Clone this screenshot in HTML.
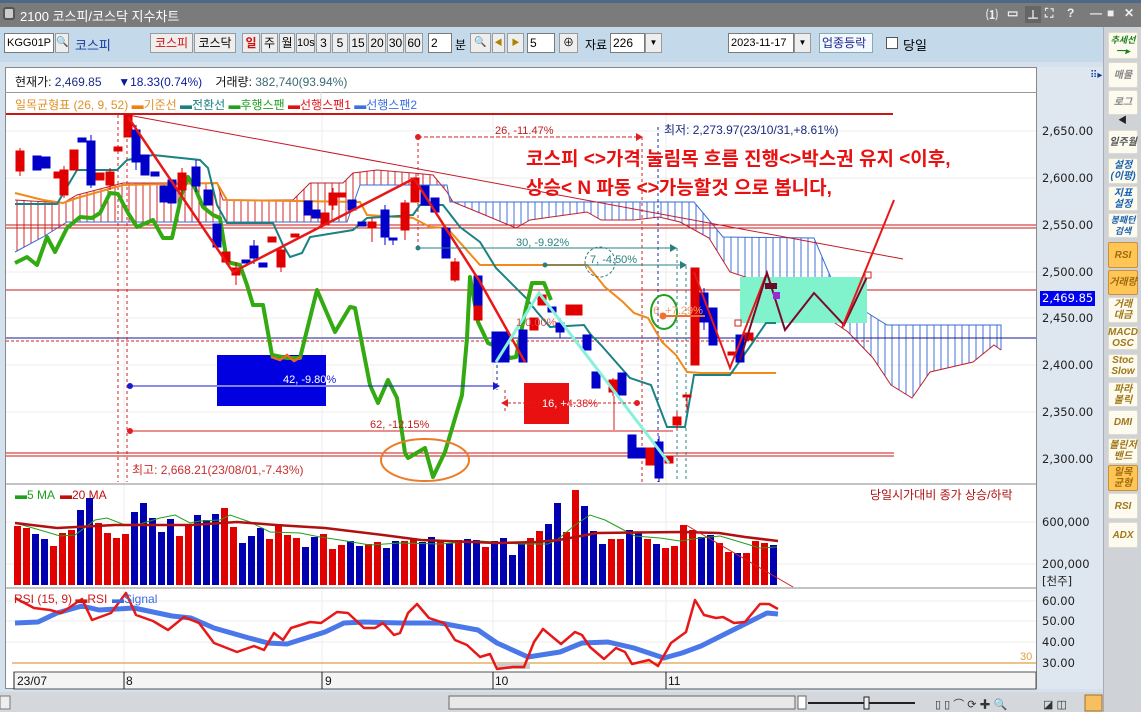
<!DOCTYPE html>
<html><head><meta charset="utf-8">
<style>
*{margin:0;padding:0;box-sizing:border-box}
body{width:1141px;height:712px;overflow:hidden;background:#d5e2ee;font-family:"Liberation Sans","Noto Sans CJK KR",sans-serif;font-size:12px;position:relative}
.a{position:absolute}
.ti{position:absolute;top:6px;color:#eee;font-size:12px;font-weight:bold;white-space:nowrap}
.btn{position:absolute;top:33px;height:20px;background:#eeeeee;border:1px solid #9a9a9a;text-align:center;line-height:18px;font-size:12px;color:#000}
.inp{position:absolute;top:33px;height:20px;background:#fff;border:1px solid #7a7a7a;line-height:18px;padding-left:2px;font-size:12px}
.sb{position:absolute;left:1108px;width:30px;background:#fdfaef;border:1px solid #e0dccc;border-radius:2px;font-size:10px;font-style:italic;font-weight:bold;text-align:center;line-height:11px;color:#a07818;display:flex;align-items:center;justify-content:center}
.sb.o{background:#ffc655;border:1px solid #c89040;color:#a06a10}
.sb.b{color:#1a62b0}
.ax{position:absolute;left:1042px;font-family:"DejaVu Sans",sans-serif;font-size:11.5px;color:#222}
</style></head><body>
<div class="a" style="left:0;top:0;width:1141px;height:3px;background:#4c6a88"></div>
<div class="a" style="left:0;top:3px;width:1141px;height:24px;background:#7b7b7b"></div>
<div class="a" style="left:3px;top:7px;width:12px;height:13px;background:#ccc;border-radius:3px;border:2px solid #555"></div>
<div class="a" style="left:20px;top:6px;color:#fff;font-size:13px">2100 코스피/코스닥 지수차트</div>
<div class="ti" style="left:986px">⑴</div>
<div class="ti" style="left:1007px">▭</div>
<div class="ti" style="left:1025px;background:#666;padding:0 2px">⊥</div>
<div class="ti" style="left:1045px">⛶</div>
<div class="ti" style="left:1067px">?</div>
<div class="ti" style="left:1090px">—</div>
<div class="ti" style="left:1107px">■</div>
<div class="ti" style="left:1124px">✕</div>
<div class="a" style="left:0;top:27px;width:1141px;height:35px;background:#c4daeb"></div>
<div class="inp" style="left:4px;width:50px;font-size:11px">KGG01P</div>
<div class="btn" style="left:55px;width:14px;font-size:10px">🔍</div>
<div class="a" style="left:75px;top:35px;color:#1a3aa0;font-size:13px">코스피</div>
<div class="btn" style="left:150px;width:43px;color:#d01010">코스피</div>
<div class="btn" style="left:194px;width:42px">코스닥</div>
<div class="btn" style="left:242px;width:18px;color:#d01010;font-weight:bold">일</div>
<div class="btn" style="left:261px;width:17px">주</div>
<div class="btn" style="left:279px;width:16px">월</div>
<div class="btn" style="left:296px;width:19px;font-size:11px">10s</div>
<div class="btn" style="left:316px;width:15px">3</div>
<div class="btn" style="left:332px;width:16px">5</div>
<div class="btn" style="left:349px;width:18px">15</div>
<div class="btn" style="left:368px;width:18px">20</div>
<div class="btn" style="left:387px;width:17px">30</div>
<div class="btn" style="left:405px;width:18px">60</div>
<div class="inp" style="left:428px;width:24px">2</div>
<div class="a" style="left:455px;top:36px">분</div>
<div class="btn" style="left:470px;width:21px;font-size:10px">🔍</div>
<div class="btn" style="left:492px;width:13px;font-size:8px;color:#b08000">◀</div>
<div class="btn" style="left:507px;width:17px;font-size:8px;color:#b08000">▶</div>
<div class="inp" style="left:527px;width:28px">5</div>
<div class="btn" style="left:559px;width:19px;font-size:11px">⊕</div>
<div class="a" style="left:585px;top:36px">자료</div>
<div class="inp" style="left:610px;width:35px">226</div>
<div class="btn" style="left:645px;width:17px;font-size:8px">▼</div>
<div class="inp" style="left:728px;width:66px;font-size:11px">2023-11-17</div>
<div class="btn" style="left:794px;width:17px;font-size:8px">▼</div>
<div class="inp" style="left:819px;width:54px;color:#1a2a90;border-color:#8aa;background:#f4f8ff">업종등락</div>
<div class="a" style="left:886px;top:37px;width:12px;height:12px;background:#fff;border:1px solid #555"></div>
<div class="a" style="left:903px;top:35px;font-size:13px">당일</div>

<div class="a" style="left:1037px;top:67px;width:66px;height:622px;background:#dee7f0"></div>
<div class="a" style="left:1090px;top:70px;font-size:10px;color:#0a3a9a">⠿▸</div>
<div class="a" style="left:1103px;top:27px;width:38px;height:685px;background:#cfd3d7;border-left:1px solid #aab"></div>
<div class="sb" style="top:32px;height:27px;color:#208020;font-size:9px;background:#fdfaef">추세선<br>━▸</div>
<div class="sb" style="top:62px;height:26px;color:#888">매물</div>
<div class="sb" style="top:90px;height:25px;color:#888">로그</div>
<div class="a" style="left:1118px;top:113px;font-size:9px;color:#222">◀</div>
<div class="sb" style="top:130px;height:24px;color:#555">일주월</div>
<div class="sb b" style="top:158px;height:26px">설정<br>(이평)</div>
<div class="sb b" style="top:186px;height:25px">지표<br>설정</div>
<div class="sb b" style="top:213px;height:25px;font-size:9px">봉패턴<br>검색</div>
<div class="sb o" style="top:242px;height:26px">RSI</div>
<div class="sb o" style="top:270px;height:25px">거래량</div>
<div class="sb" style="top:297px;height:26px">거래<br>대금</div>
<div class="sb" style="top:326px;height:24px">MACD<br>OSC</div>
<div class="sb" style="top:354px;height:24px">Stoc<br>Slow</div>
<div class="sb" style="top:382px;height:25px">파라<br>볼릭</div>
<div class="sb" style="top:410px;height:25px">DMI</div>
<div class="sb" style="top:438px;height:26px">볼린저<br>밴드</div>
<div class="sb o" style="top:465px;height:26px">일목<br>균형</div>
<div class="sb" style="top:493px;height:26px">RSI</div>
<div class="sb" style="top:522px;height:26px">ADX</div>

<div class="a" style="left:5px;top:67px;width:1032px;height:622px;background:#fff;border:1px solid #888"></div>
<div class="a" style="left:5px;top:92px;width:1032px;height:1px;background:#999"></div>
<div class="a" style="left:15px;top:73px;font-size:12px;color:#111">현재가: <span style="color:#1a2a80">2,469.85</span> &nbsp;&nbsp;&nbsp;&nbsp;<span style="color:#0a1a9a">▼18.33(0.74%)</span> &nbsp;&nbsp;&nbsp;거래량: <span style="color:#3a6a70">382,740(93.94%)</span></div>
<div class="a" style="left:15px;top:96px;font-size:12px;color:#e0902a">일목균형표 (26, 9, 52) <span style="color:#f08010">▬</span>기준선 <span style="color:#1a8080">▬</span><span style="color:#1a8080">전환선</span> <span style="color:#20a020">▬후행스팬</span> <span style="color:#e01010">▬선행스팬1</span> <span style="color:#3a70e0">▬선행스팬2</span></div>

<div class="ax" style="top:124px">2,650.00</div>
<div class="ax" style="top:171px">2,600.00</div>
<div class="ax" style="top:218px">2,550.00</div>
<div class="ax" style="top:265px">2,500.00</div>
<div class="ax" style="top:311px">2,450.00</div>
<div class="ax" style="top:358px">2,400.00</div>
<div class="ax" style="top:405px">2,350.00</div>
<div class="ax" style="top:452px">2,300.00</div>
<div class="a" style="left:1040px;top:291px;width:55px;height:15px;background:#0000f0;color:#fff;font-family:'DejaVu Sans',sans-serif;font-size:11.5px;line-height:15px;padding-left:2px">2,469.85</div>
<div class="ax" style="top:515px">600,000</div>
<div class="ax" style="top:557px">200,000</div>
<div class="ax" style="top:573px">[천주]</div>
<div class="ax" style="top:594px">60.00</div>
<div class="ax" style="top:614px">50.00</div>
<div class="ax" style="top:635px">40.00</div>
<div class="ax" style="top:656px">30.00</div>

<svg class="a" style="left:0;top:0" width="1141" height="712" viewBox="0 0 1141 712" font-family="Liberation Sans, Noto Sans CJK KR, sans-serif">
<defs>
<pattern id="hr" width="7" height="10" patternUnits="userSpaceOnUse"><line x1="3" y1="0" x2="3" y2="10" stroke="#d02828" stroke-width="1"/></pattern>
<pattern id="hb" width="7" height="10" patternUnits="userSpaceOnUse"><line x1="3" y1="0" x2="3" y2="10" stroke="#4070d8" stroke-width="1"/></pattern>
<clipPath id="cb"><rect x="217" y="355" width="109" height="51"/></clipPath>
<clipPath id="cr"><rect x="524" y="383" width="45" height="41"/></clipPath>
</defs>
<g stroke="#ececec" stroke-width="1">
<line x1="124" y1="112" x2="124" y2="672"/><line x1="322" y1="112" x2="322" y2="672"/><line x1="493" y1="112" x2="493" y2="672"/><line x1="666" y1="112" x2="666" y2="672"/>
<line x1="6" y1="131" x2="1036" y2="131"/><line x1="6" y1="178" x2="1036" y2="178"/><line x1="6" y1="272" x2="1036" y2="272"/><line x1="6" y1="318" x2="1036" y2="318"/><line x1="6" y1="365" x2="1036" y2="365"/><line x1="6" y1="412" x2="1036" y2="412"/>
<line x1="6" y1="522" x2="1036" y2="522"/><line x1="6" y1="564" x2="1036" y2="564"/>
<line x1="6" y1="601" x2="1036" y2="601"/><line x1="6" y1="621" x2="1036" y2="621"/><line x1="6" y1="642" x2="1036" y2="642"/>
</g>
<line x1="321" y1="92" x2="321" y2="112" stroke="#ddd"/>
<line x1="6" y1="484" x2="1036" y2="484" stroke="#888"/>
<line x1="6" y1="588" x2="1036" y2="588" stroke="#888"/>

<polygon points="15,200 63,203 77,195 123,183 217,183 223,200 293,200 310,183 343,183 353,173 377,170 413,173 433,175 447,192 453,202 450,202 447,185 360,185 347,222 67,222 43,237 15,252" fill="url(#hr)"/>
<polygon points="450,202 694,202 723,237 814,238 837,292 866,312 887,325 1001,325 1001,350 994,345 973,362 930,372 912,398 891,385 873,358 848,332 819,312 776,287 730,272 709,238 680,222 659,217 634,220 601,220 587,212 530,220 516,228 480,213 453,202" fill="url(#hb)"/>
<polyline points="15,200 63,203 77,195 123,183 217,183 223,200 293,200 310,183 343,183 353,173 377,170 413,173 433,175 447,192 453,202 480,213 516,228 530,220 587,212 601,220 634,220 659,217 680,222 709,238 730,272 776,287 819,312 848,332 873,358 891,385 912,398 930,372 973,362 994,345 1001,350" fill="none" stroke="#c02030" stroke-width="1"/>
<polyline points="15,252 43,237 67,222 347,222 360,185 447,185 450,202 694,202 723,237 814,238 837,292 866,312 887,325 1001,325 1001,350" fill="none" stroke="#3a6ad8" stroke-width="1"/>

<line x1="6" y1="114" x2="893" y2="114" stroke="#c81818" stroke-width="2"/>
<line x1="6" y1="225" x2="1036" y2="225" stroke="#c81818" stroke-width="1"/>
<line x1="6" y1="228" x2="1036" y2="228" stroke="#c81818" stroke-width="1"/>
<line x1="6" y1="290" x2="1036" y2="290" stroke="#c81818" stroke-width="1"/>
<line x1="6" y1="338" x2="1036" y2="338" stroke="#1a1a90" stroke-width="1"/>
<line x1="6" y1="341" x2="870" y2="341" stroke="#d02020" stroke-width="1" stroke-dasharray="3,2"/>
<line x1="130" y1="431" x2="673" y2="431" stroke="#d02020" stroke-width="1"/>
<line x1="6" y1="453" x2="894" y2="453" stroke="#c81818" stroke-width="1"/>
<line x1="6" y1="456" x2="894" y2="456" stroke="#c81818" stroke-width="1"/>
<line x1="128" y1="115" x2="903" y2="259" stroke="#c81828" stroke-width="1"/>
<line x1="118" y1="115" x2="118" y2="482" stroke="#d02020" stroke-dasharray="3,3"/>
<line x1="127" y1="115" x2="127" y2="482" stroke="#d02020" stroke-dasharray="3,3"/>
<line x1="418" y1="137" x2="418" y2="250" stroke="#d02020" stroke-dasharray="3,3"/>
<line x1="642" y1="137" x2="642" y2="482" stroke="#d02020" stroke-dasharray="3,3"/>
<line x1="658" y1="127" x2="658" y2="482" stroke="#1a2aa0" stroke-dasharray="3,3"/>
<line x1="677" y1="248" x2="677" y2="482" stroke="#2a8080" stroke-dasharray="3,3"/>
<line x1="686" y1="266" x2="686" y2="482" stroke="#2a8080" stroke-dasharray="3,3"/>
<line x1="497" y1="365" x2="497" y2="390" stroke="#1a2aa0" stroke-dasharray="3,3"/>
<line x1="505" y1="390" x2="505" y2="412" stroke="#d02020" stroke-dasharray="3,3"/>
<line x1="614" y1="396" x2="614" y2="430" stroke="#d02020"/>

<rect x="740" y="277" width="127" height="46" fill="#80f2cc"/>
<rect x="217" y="355" width="109" height="51" fill="#0000e0"/>
<rect x="524" y="383" width="45" height="41" fill="#e81010"/>

<polyline points="15,193 43,200 63,203 77,198 123,185 217,183 227,200 360,202 367,215 413,218 430,227 447,228 480,265 587,265 605,287 623,302 634,313 648,318 662,342 676,355 687,372 701,373 776,373" fill="none" stroke="#f08a1a" stroke-width="2"/>
<polyline points="15,204 57,204 77,170 117,170 127,160 153,155 200,160 208,168 217,205 227,223 273,223 283,245 290,257 302,253 310,237 353,230 367,218 413,215 420,205 443,205 460,227 480,242 496,268 526,298 537,312 550,327 584,325 591,335 601,345 630,378 651,385 667,427 685,427 694,375 730,375 751,345 766,323 776,323" fill="none" stroke="#1a8282" stroke-width="2"/>
<polyline points="15,263 27,257 37,265 47,237 55,252 67,228 80,217 92,218 100,213 110,193 118,194 128,213 137,227 153,220 163,238 172,238 182,193 188,177 195,188 203,207 213,215 220,218 227,262 240,265 247,285 253,305 263,305 272,355 287,358 300,358 317,290 335,332 350,307 355,308 370,385 378,403 388,380 397,398 405,453 408,458 425,448 433,477 445,452 462,395 467,338 470,277 478,322 488,343 500,348 510,358 516,357 526,308 532,283 544,283 551,300" fill="none" stroke="#33aa11" stroke-width="4" stroke-linejoin="round"/>
<polyline points="271,357 280,360 287,355 294,361 301,357" fill="none" stroke="#e86a20" stroke-width="2.5"/>

<g stroke-width="1">
<g fill="#e00000" stroke="#e00000">
<line x1="20" y1="148" x2="20" y2="176"/><rect x="16" y="151" width="8" height="20"/>
<rect x="54" y="172" width="8" height="6"/>
<line x1="64" y1="166" x2="64" y2="198"/><rect x="60" y="170" width="8" height="25"/>
<rect x="70" y="150" width="8" height="20"/>
<rect x="96" y="173" width="8" height="7"/>
<line x1="110" y1="168" x2="110" y2="190"/><rect x="106" y="172" width="8" height="13"/>
<rect x="114" y="147" width="8" height="4"/>
<rect x="124" y="115" width="8" height="22"/>
<line x1="182" y1="168" x2="182" y2="195"/><rect x="178" y="173" width="8" height="17"/>
<rect x="222" y="252" width="8" height="10"/>
<line x1="236" y1="262" x2="236" y2="285"/><rect x="232" y="268" width="8" height="7"/>
<rect x="268" y="237" width="8" height="5"/>
<line x1="281" y1="247" x2="281" y2="272"/><rect x="277" y="250" width="8" height="17"/>
<rect x="291" y="234" width="8" height="3"/>
<rect x="321" y="213" width="8" height="12"/>
<line x1="333" y1="188" x2="333" y2="210"/><rect x="329" y="193" width="8" height="12"/>
<rect x="338" y="193" width="8" height="4"/>
<line x1="372" y1="218" x2="372" y2="242"/><rect x="368" y="222" width="8" height="6"/>
<line x1="405" y1="200" x2="405" y2="240"/><rect x="401" y="203" width="8" height="27"/>
<rect x="411" y="178" width="8" height="24"/>
<line x1="455" y1="258" x2="455" y2="282"/><rect x="451" y="262" width="8" height="18"/>
<rect x="474" y="303" width="8" height="17"/>
<rect x="530" y="318" width="8" height="12"/>
<rect x="538" y="295" width="8" height="10"/>
<rect x="566" y="305" width="8" height="10"/><rect x="574" y="305" width="8" height="10"/>
<line x1="613" y1="378" x2="613" y2="396"/><rect x="609" y="380" width="8" height="12"/>
<rect x="646" y="448" width="8" height="17"/>
<rect x="665" y="457" width="8" height="6"/>
<line x1="677" y1="412" x2="677" y2="430"/><rect x="673" y="417" width="8" height="8"/>
<rect x="683" y="395" width="8" height="2"/><line x1="687" y1="395" x2="687" y2="410"/>
<rect x="691" y="268" width="8" height="97"/>
<rect x="728" y="352" width="8" height="3"/>
<rect x="745" y="333" width="8" height="7"/>
</g>
<g fill="#0000c8" stroke="#0000c8">
<rect x="33" y="156" width="8" height="14"/><rect x="42" y="157" width="8" height="11"/>
<rect x="78" y="138" width="8" height="4"/>
<line x1="91" y1="135" x2="91" y2="188"/><rect x="87" y="141" width="8" height="44"/>
<line x1="136" y1="125" x2="136" y2="170"/><rect x="132" y="130" width="8" height="32"/>
<rect x="141" y="155" width="8" height="20"/>
<rect x="151" y="172" width="8" height="4"/>
<rect x="160" y="186" width="8" height="16"/>
<rect x="168" y="180" width="8" height="23"/>
<line x1="196" y1="160" x2="196" y2="192"/><rect x="192" y="167" width="8" height="19"/>
<rect x="204" y="190" width="8" height="15"/>
<rect x="213" y="224" width="8" height="23"/>
<rect x="242" y="260" width="8" height="3"/>
<line x1="254" y1="240" x2="254" y2="264"/><rect x="250" y="246" width="8" height="12"/>
<rect x="259" y="263" width="8" height="4"/>
<rect x="304" y="201" width="8" height="14"/>
<rect x="312" y="210" width="8" height="8"/>
<rect x="348" y="200" width="8" height="10"/>
<rect x="358" y="222" width="8" height="4"/>
<line x1="385" y1="205" x2="385" y2="245"/><rect x="381" y="210" width="8" height="27"/>
<rect x="389" y="238" width="8" height="2"/><line x1="393" y1="238" x2="393" y2="245"/>
<rect x="421" y="186" width="8" height="19"/>
<rect x="431" y="198" width="8" height="14"/>
<rect x="442" y="228" width="8" height="30"/>
<rect x="474" y="276" width="8" height="29"/>
<rect x="492" y="332" width="8" height="30"/><rect x="501" y="332" width="8" height="30"/>
<rect x="519" y="330" width="8" height="32"/>
<rect x="548" y="307" width="8" height="5"/>
<line x1="560" y1="318" x2="560" y2="338"/><rect x="556" y="323" width="8" height="9"/>
<rect x="583" y="335" width="8" height="15"/>
<rect x="592" y="372" width="8" height="16"/>
<rect x="618" y="373" width="8" height="22"/>
<rect x="628" y="435" width="8" height="23"/>
<rect x="637" y="448" width="8" height="10"/>
<line x1="659" y1="436" x2="659" y2="482"/><rect x="655" y="442" width="8" height="36"/>
<line x1="704" y1="288" x2="704" y2="330"/><rect x="700" y="293" width="8" height="29"/>
<rect x="709" y="308" width="8" height="37"/>
<rect x="736" y="335" width="8" height="27"/>
</g>
</g>

<polyline points="128,117 233,272 415,178" fill="none" stroke="#e81818" stroke-width="2.5"/>
<polyline points="415,180 480,282 525,362" fill="none" stroke="#e81818" stroke-width="2.5"/>
<polyline points="496,362 539,293 669,463" fill="none" stroke="#88f0dc" stroke-width="3"/>
<polyline points="694,272 730,368 766,275" fill="none" stroke="#e81818" stroke-width="2"/>
<polyline points="740,360 767,273 785,330 814,293 844,325 867,277" fill="none" stroke="#7a0a2a" stroke-width="2"/>
<line x1="842" y1="328" x2="894" y2="200" stroke="#e81818" stroke-width="2"/>
<rect x="765" y="283" width="12" height="6" fill="#6a0a2a"/>
<rect x="773" y="292" width="7" height="7" fill="#9a2ad8"/>
<rect x="735" y="320" width="6" height="6" fill="#fff" stroke="#d02020"/>
<rect x="865" y="272" width="6" height="6" fill="#fff" stroke="#d02020"/>

<line x1="130" y1="386" x2="493" y2="386" stroke="#1a1ad0"/><line x1="217" y1="386" x2="326" y2="386" stroke="#fff"/><circle cx="130" cy="386" r="3" fill="#1a1ad0"/><polygon points="493,382 500,386 493,390" fill="#1a1ad0"/>
<circle cx="130" cy="431" r="3" fill="#e02020"/>
<text x="283" y="383" font-size="11" fill="#1a1ad0">42, -9.80%</text>
<text x="283" y="383" font-size="11" fill="#fff" clip-path="url(#cb)">42, -9.80%</text>
<text x="370" y="428" font-size="11" fill="#c02020">62, -12.15%</text>
<text x="132" y="474" font-size="12" fill="#c83030">최고: 2,668.21(23/08/01,-7.43%)</text>
<ellipse cx="425" cy="460" rx="44" ry="21" fill="none" stroke="#ee7a28" stroke-width="2"/>
<line x1="508" y1="403" x2="637" y2="403" stroke="#d02020" stroke-dasharray="3,2"/><circle cx="637" cy="403" r="3" fill="#e02020"/><polygon points="508,399 501,403 508,407" fill="#e02020"/>
<text x="542" y="407" font-size="11" fill="#e02020">16, +4.38%</text>
<text x="542" y="407" font-size="11" fill="#fff" clip-path="url(#cr)">16, +4.38%</text>
<line x1="418" y1="137" x2="636" y2="137" stroke="#d02020" stroke-dasharray="4,2"/><circle cx="418" cy="137" r="3" fill="#e02020"/><polygon points="636,133 643,137 636,141" fill="#e02020"/>
<text x="495" y="134" font-size="11" fill="#c02020">26, -11.47%</text>
<text x="664" y="134" font-size="12" fill="#1a2a80">최저: 2,273.97(23/10/31,+8.61%)</text>
<line x1="418" y1="248" x2="670" y2="248" stroke="#2a8080"/><circle cx="418" cy="248" r="2.5" fill="#2a8080"/><polygon points="670,244 677,248 670,252" fill="#2a8080"/>
<text x="516" y="246" font-size="11" fill="#2a8080">30, -9.92%</text>
<line x1="545" y1="265" x2="680" y2="265" stroke="#2a8080"/><circle cx="545" cy="265" r="2.5" fill="#2a8080"/><polygon points="680,261 687,265 680,269" fill="#2a8080"/>
<ellipse cx="600" cy="262" rx="15" ry="15" fill="none" stroke="#2a8080" stroke-dasharray="3,2"/>
<text x="590" y="263" font-size="11" fill="#2a8080">7, -4.50%</text>
<ellipse cx="664" cy="312" rx="13" ry="17" fill="none" stroke="#20a020" stroke-width="2"/>
<line x1="663" y1="316" x2="705" y2="316" stroke="#f07030" stroke-width="2"/><circle cx="663" cy="316" r="3.5" fill="#f07030"/>
<text x="653" y="314" font-size="11" fill="#f0a070">6, +7.29%</text>
<text x="516" y="326" font-size="11" fill="#d05050">1  0.00%</text>
<text x="526" y="165" font-size="19" font-weight="bold" fill="#e81010">코스피 &lt;&gt;가격 눌림목 흐름 진행&lt;&gt;박스권 유지 &lt;이후,</text>
<text x="526" y="194" font-size="19" font-weight="bold" fill="#e81010">상승&lt; N 파동 &lt;&gt;가능할것 으로 봅니다,</text>

<text x="15" y="499" font-size="12" fill="#1aa01a">▬5 MA</text><text x="60" y="499" font-size="12" fill="#c01010">▬20 MA</text>
<text x="870" y="499" font-size="12" fill="#b01010">당일시가대비 종가 상승/하락</text>
<path fill="#e00000" d="M14 526h7V585h-7zM23 528h7V585h-7zM50 546h7V585h-7zM59 533h7V585h-7zM68 530h7V585h-7zM95 523h7V585h-7zM104 533h7V585h-7zM113 538h7V585h-7zM122 534h7V585h-7zM176 536h7V585h-7zM185 525h7V585h-7zM221 508h7V585h-7zM230 527h7V585h-7zM266 539h7V585h-7zM275 524h7V585h-7zM284 535h7V585h-7zM293 538h7V585h-7zM320 534h7V585h-7zM329 549h7V585h-7zM338 545h7V585h-7zM365 544h7V585h-7zM374 542h7V585h-7zM401 541h7V585h-7zM410 539h7V585h-7zM437 541h7V585h-7zM455 540h7V585h-7zM482 547h7V585h-7zM527 538h7V585h-7zM536 531h7V585h-7zM563 532h7V585h-7zM572 490h7V585h-7zM608 539h7V585h-7zM617 539h7V585h-7zM644 539h7V585h-7zM662 548h7V585h-7zM671 546h7V585h-7zM680 525h7V585h-7zM689 530h7V585h-7zM716 543h7V585h-7zM725 552h7V585h-7zM743 553h7V585h-7zM752 541h7V585h-7zM761 543h7V585h-7z"/>
<path fill="#0000b0" d="M32 534h7V585h-7zM41 539h7V585h-7zM77 510h7V585h-7zM86 498h7V585h-7zM131 512h7V585h-7zM140 503h7V585h-7zM149 518h7V585h-7zM158 532h7V585h-7zM167 519h7V585h-7zM194 515h7V585h-7zM203 520h7V585h-7zM212 514h7V585h-7zM239 543h7V585h-7zM248 536h7V585h-7zM257 528h7V585h-7zM302 547h7V585h-7zM311 537h7V585h-7zM347 541h7V585h-7zM356 546h7V585h-7zM383 548h7V585h-7zM392 541h7V585h-7zM419 542h7V585h-7zM428 537h7V585h-7zM446 543h7V585h-7zM464 539h7V585h-7zM473 540h7V585h-7zM491 541h7V585h-7zM500 538h7V585h-7zM509 555h7V585h-7zM518 543h7V585h-7zM545 524h7V585h-7zM554 503h7V585h-7zM581 506h7V585h-7zM590 531h7V585h-7zM599 544h7V585h-7zM626 530h7V585h-7zM635 533h7V585h-7zM653 544h7V585h-7zM698 537h7V585h-7zM707 535h7V585h-7zM734 553h7V585h-7zM770 545h7V585h-7z"/>
<polyline points="15,523 40,530 60,536 75,535 95,520 107,518 125,525 140,524 160,518 175,515 190,523 200,521 220,520 230,515 250,522 270,532 300,533 320,537 340,540 370,545 400,543 440,544 480,541 520,544 548,544 557,540 575,525 590,515 605,520 620,528 635,536 660,538 680,541 700,538 720,536 740,542 760,548 777,547" fill="none" stroke="#20a020" stroke-width="1"/>
<polyline points="15,523 57,528 115,525 191,525 237,522 276,525 325,528 383,535 421,540 497,543 536,542 559,540 597,533 682,532 719,533 745,537 778,541" fill="none" stroke="#b01010" stroke-width="2.5"/>
<line x1="686" y1="525" x2="793" y2="587" stroke="#d02020" stroke-width="1"/>

<line x1="12" y1="663" x2="1036" y2="663" stroke="#e0a040" stroke-width="1.2"/>
<text x="1020" y="660" font-size="11" fill="#e0a040">30</text>
<polygon points="497,663 530,663 530,669 497,669" fill="#ccc"/>
<polyline points="15,623 38,622 57,613 82,606 99,610 134,608 153,612 172,616 191,618 214,628 249,638 268,643 287,644 306,638 325,632 344,623 364,622 402,623 440,623 478,630 497,643 528,657 560,652 582,643 608,642 634,648 664,658 682,653 701,646 727,633 753,620 767,613 778,614" fill="none" stroke="#4a78e8" stroke-width="5" stroke-linejoin="round"/>
<polyline points="15,598 34,608 50,610 61,613 82,599 92,620 111,613 126,593 136,615 153,621 168,630 184,617 199,623 214,643 237,652 254,646 264,650 274,633 283,640 291,628 310,622 321,623 337,612 348,613 364,628 375,628 383,623 394,635 400,633 408,613 417,604 429,618 444,623 455,640 467,645 480,657 490,654 497,669 513,667 524,667 534,642 543,629 561,644 575,632 582,635 590,647 604,659 616,648 625,652 632,664 649,660 658,666 671,643 686,632 695,600 704,615 716,618 723,617 734,623 745,622 760,604 769,604 778,609" fill="none" stroke="#e81818" stroke-width="2.5" stroke-linejoin="round"/>
<text x="14" y="603" font-size="12" fill="#d01818">RSI (15, 9) ▬RSI</text><text x="112" y="603" font-size="12" fill="#3a6ae0">▬Signal</text>

<rect x="14" y="672" width="1022" height="17" fill="#f4f4f4" stroke="#555"/>
<g stroke="#222"><line x1="14" y1="672" x2="14" y2="689"/><line x1="124" y1="672" x2="124" y2="689"/><line x1="322" y1="672" x2="322" y2="689"/><line x1="493" y1="672" x2="493" y2="689"/><line x1="666" y1="672" x2="666" y2="689"/></g>
<g font-size="12" fill="#111"><text x="17" y="685">23/07</text><text x="126" y="685">8</text><text x="325" y="685">9</text><text x="495" y="685">10</text><text x="668" y="685">11</text></g>

<rect x="0" y="692" width="1103" height="20" fill="#d4d8dc"/>
<rect x="0" y="696" width="10" height="13" fill="#eee" stroke="#777"/>
<rect x="449" y="696" width="346" height="13" fill="#e8e8e8" stroke="#666"/>
<rect x="798" y="696" width="8" height="13" fill="#fff" stroke="#666"/>
<line x1="808" y1="703" x2="915" y2="703" stroke="#222" stroke-width="2"/>
<rect x="864" y="697" width="5" height="12" fill="#eee" stroke="#222"/>
<g font-size="11" fill="#333"><text x="935" y="708">▯ ▯ ⌒ ⟳ ✚ 🔍</text><text x="1043" y="708">◪ ◫</text></g>
<rect x="1085" y="695" width="17" height="16" fill="#f6c060" stroke="#a07030"/>
</svg>
</body></html>
